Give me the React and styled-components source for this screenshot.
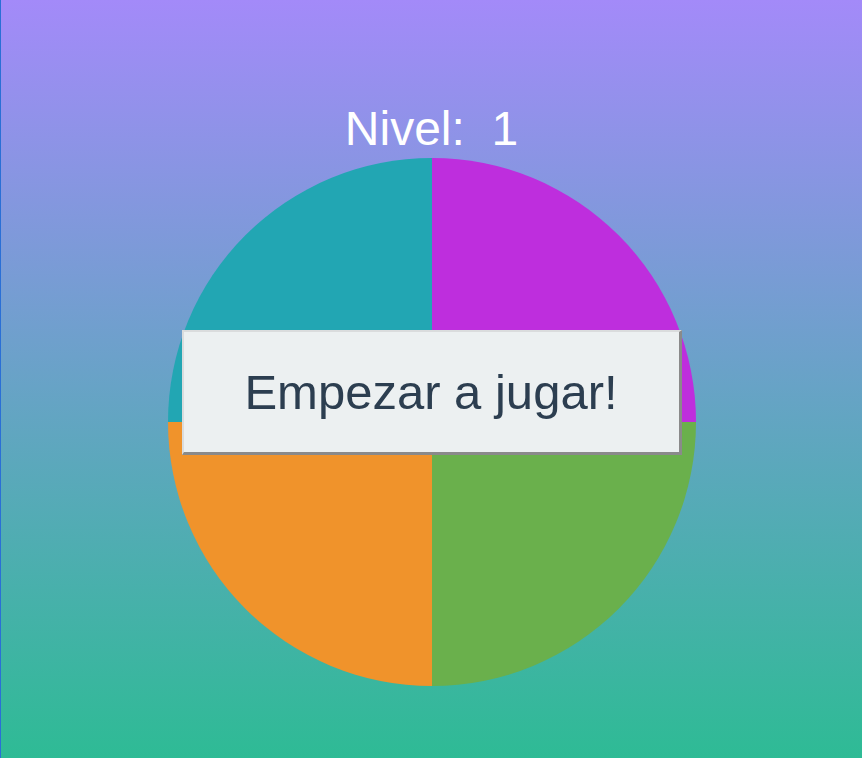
import React from "react";
import styled, { createGlobalStyle } from "styled-components";

const Global = createGlobalStyle`
  html, body { margin: 0; padding: 0; }
  body { font-family: "Liberation Sans", Arial, sans-serif; }
`;

const Page = styled.main`
  box-sizing: border-box;
  min-height: 758px;
  border-left: 1px solid #2a6fd6;
  background: linear-gradient(180deg, #a38af9 0%, #2ebb95 100%);
  display: flex;
  flex-direction: column;
  align-items: center;
  padding-top: 101px;
`;

const Title = styled.h1`
  margin: 0 0 1px;
  font-size: 48px;
  font-weight: 400;
  line-height: 56px;
  color: #ffffff;
  white-space: pre;
`;

const Board = styled.div`
  position: relative;
  width: 528px;
  height: 528px;
  display: grid;
`;

const Disc = styled.div`
  display: grid;
  grid-template-columns: 1fr 1fr;
  grid-template-rows: 1fr 1fr;
  border-radius: 50%;
  overflow: hidden;
`;

const Quadrant = styled.div`
  background: ${(p) => p.$color};
`;

const StartButton = styled.button`
  position: absolute;
  left: 14px;
  top: 172px;
  box-sizing: border-box;
  width: 500px;
  height: 125px;
  background: #ecf0f1;
  color: #2c3e50;
  font-family: "Liberation Sans", Arial, sans-serif;
  font-size: 49px;
  border-style: solid;
  border-width: 2px 3px 3px 2px;
  border-color: #dadcdd #8a8a8a #8a8a8a #dadcdd;
  padding: 0;
  cursor: pointer;
`;

export default function App() {
  return (
    <>
      <Global />
      <Page>
        <Title>Nivel:  1</Title>
        <Board>
          <Disc>
            <Quadrant $color="#22a6b3" />
            <Quadrant $color="#be2edd" />
            <Quadrant $color="#f0932b" />
            <Quadrant $color="#6ab04c" />
          </Disc>
          <StartButton>Empezar a jugar!</StartButton>
        </Board>
      </Page>
    </>
  );
}
